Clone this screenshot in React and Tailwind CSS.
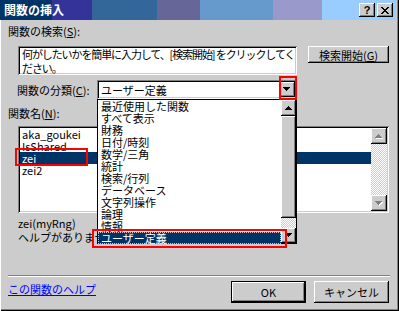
import React from 'react';

// win98 style borders
const raised = "bg-[#cccccc] shadow-[inset_-1px_-1px_#000,inset_1px_1px_#fff,inset_-2px_-2px_#808080]";
const sunken = "bg-white shadow-[inset_1px_1px_#808080,inset_-1px_-1px_#fff,inset_2px_2px_#000,inset_-2px_-2px_#cccccc]";
const checker = "bg-[repeating-conic-gradient(#ffffff_0_25%,#cccccc_0_50%)] bg-[length:2px_2px]";

function Arrow({ down, disabled }) {
  const d = down
    ? "M0 0h7v1h-1v1h-1v1h-1v1h-1v-1h-1v-1h-1v-1h-1z"
    : "M3 0h1v1h1v1h1v1h1v1h-7v-1h1v-1h1v-1h1z";
  return (
    <svg width="8" height="5" viewBox="0 0 8 5" shapeRendering="crispEdges">
      {disabled && <path d={d} fill="#fff" transform="translate(1 1)" />}
      <path d={d} fill={disabled ? '#808080' : '#000'} />
    </svg>
  );
}

function ScrollBtn({ down, disabled, h = 'h-[16px]' }) {
  return (
    <div className={`${raised} ${h} w-full flex items-center justify-center shrink-0`}>
      <Arrow down={down} disabled={disabled} />
    </div>
  );
}

const categories = [
  '最近使用した関数', 'すべて表示', '財務', '日付/時刻', '数学/三角', '統計',
  '検索/行列', 'データベース', '文字列操作', '論理', '情報',
];

export default function App() {
  return (
    <div className="relative w-[399px] h-[311px] bg-[#cccccc] overflow-hidden text-[11px] leading-[14px] text-black font-['Noto_Sans_CJK_JP',sans-serif] shadow-[inset_1px_0_#fff,inset_-1px_-1px_#000,inset_-2px_-2px_#808080]">
      {/* title bar */}
      <div className="w-[396px] h-[20px] flex items-center justify-between pl-[4px] pr-[3px] bg-[linear-gradient(to_right,#003366_0_52px,#333399_52px_92px,#336699_92px_157px,#666699_157px_200px,#6699cc_200px_273px,#9999cc_273px_322px,#99ccff_322px)]">
        <span className="text-white font-bold text-[12px] leading-[14px]">関数の挿入</span>
        <div className="flex gap-[2px]">
          <div className={`${raised} w-[16px] h-[14px] flex items-center justify-center font-bold text-[11px] leading-[12px] font-['Liberation_Sans',sans-serif]`}>?</div>
          <div className={`${raised} w-[16px] h-[14px] flex items-center justify-center`}>
            <svg width="8" height="7" viewBox="0 0 8 7" shapeRendering="crispEdges">
              <path d="M0 0h2v1h1v1h2v-1h1v-1h2v1h-1v1h-1v1h-1v1h1v1h1v1h1v1h-2v-1h-1v-1h-2v1h-1v1h-2v-1h1v-1h1v-1h1v-1h-1v-1h-1v-1h-1z" fill="#000" />
            </svg>
          </div>
        </div>
      </div>

      {/* search */}
      <div className="ml-[8px] mt-[4px] h-[14px]">関数の検索(<span className="underline">S</span>):</div>
      <div className="flex mt-[8px]">
        <div className={`${sunken} ml-[18px] w-[279px] h-[29px] pl-[4px] pt-[1px] whitespace-nowrap tracking-[-1.1px]`}>
          <div>何がしたいかを簡単に入力して、[検索開始] をクリックしてく</div>
          <div>ださい。</div>
        </div>
        <div className={`${raised} ml-[11px] w-[81px] h-[17px] flex items-center justify-center leading-[12px]`}>
          検索開始(<span className="underline">G</span>)
        </div>
      </div>

      {/* category */}
      <div className="flex items-center mt-[5px]">
        <div className="ml-[17px] w-[80px]">関数の分類(<span className="underline">C</span>):</div>
        <div className={`${sunken} w-[200px] h-[19px] p-[2px] flex items-center`}>
          <span className="flex-1 pl-[2px] leading-[12px]">ユーザー定義</span>
          <div className={`${raised} w-[16px] h-[15px] flex items-center justify-center`}>
            <Arrow down />
          </div>
        </div>
      </div>

      {/* function list */}
      <div className="ml-[8px] mt-[7px] h-[14px]">関数名(<span className="underline">N</span>):</div>
      <div className={`${sunken} mt-[6px] ml-[18px] w-[371px] h-[87px] p-[2px] flex`}>
        <div className="flex-1 leading-[12px]">
          <div className="pl-[2px] h-[12px]">aka_goukei</div>
          <div className="pl-[2px] h-[12px]">IsShared</div>
          <div className="pl-[2px] h-[12px] bg-[#003366] text-white">zei</div>
          <div className="pl-[2px] h-[12px]">zei2</div>
        </div>
        <div className="w-[16px] flex flex-col">
          <ScrollBtn disabled />
          <div className={`flex-1 ${checker}`} />
          <ScrollBtn down disabled />
        </div>
      </div>

      <div className="ml-[18px] mt-[3px] h-[14px]">zei(myRng)</div>
      <div className="ml-[18px] h-[14px]">ヘルプがありません。</div>

      <div className="ml-[8px] mt-[31px] w-[382px] h-[2px] border-t border-t-[#808080] border-b border-b-white" />

      <div className="flex items-start mt-[4px]">
        <a className="ml-[8px] mt-[1px] text-[#0000ff] underline">この関数のヘルプ</a>
        <div className="ml-auto mr-[10px] flex gap-[8px]">
          <div className="w-[75px] h-[22px] border border-black">
            <div className={`${raised} w-full h-full flex items-center justify-center leading-[12px]`}>OK</div>
          </div>
          <div className={`${raised} w-[75px] h-[22px] flex items-center justify-center leading-[12px]`}>キャンセル</div>
        </div>
      </div>

      {/* open dropdown */}
      <div className="absolute left-[97px] top-[99px] w-[200px] h-[145px] bg-white border border-black flex">
        <div className="flex-1 leading-[12px]">
          {categories.map((c) => (
            <div key={c} className="h-[12px] pl-[3px]">{c}</div>
          ))}
          <div className="h-[12px] pl-[2px] bg-[#003366] text-white border border-dotted border-[#c8c8c8] leading-[10px]">ユーザー定義</div>
        </div>
        <div className="w-[15px] flex flex-col">
          <ScrollBtn />
          <div className={`${raised} h-[102px] shrink-0`} />
          <div className={`flex-1 ${checker}`} />
          <ScrollBtn down h="h-[15px]" />
        </div>
      </div>

      {/* red annotation boxes */}
      <div className="absolute left-[279px] top-[76px] w-[18px] h-[24px] border-2 border-[#ff0000]" />
      <div className="absolute left-[15px] top-[148px] w-[73px] h-[18px] border-2 border-[#ff0000]" />
      <div className="absolute left-[92px] top-[229px] w-[195px] h-[19px] border-2 border-[#ff0000]" />
    </div>
  );
}
